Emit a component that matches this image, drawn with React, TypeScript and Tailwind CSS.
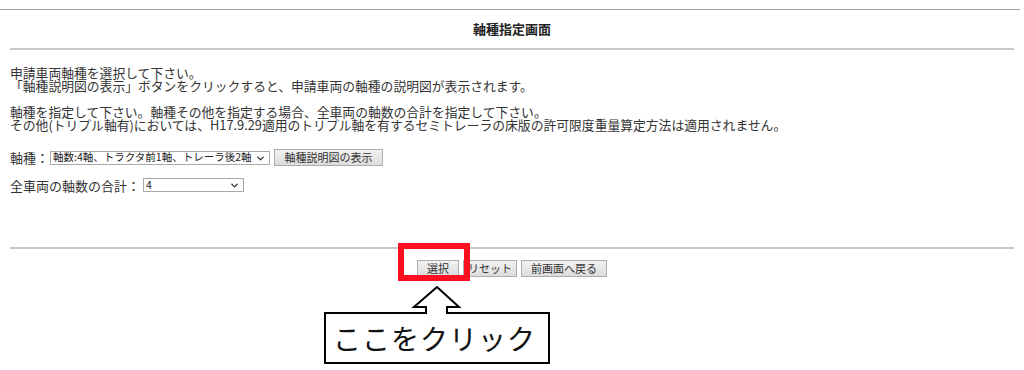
import { ChevronDown } from 'lucide-react';

const jp = { fontFamily: '"Noto Sans CJK JP", "Noto Sans", sans-serif' };

function FakeSelect({ value, width }: { value: string; width: string }) {
  return (
    <div className={`relative inline-flex h-[14px] items-center border border-[#a9a9a9] bg-white ${width}`}>
      <span className="pl-[2px] text-[10.5px] leading-none text-[#222] whitespace-nowrap">{value}</span>
      <ChevronDown className="absolute right-[3px] top-[1px] h-[11px] w-[11px] text-[#333]" strokeWidth={3} />
    </div>
  );
}

function Btn({ children, className = '' }: { children: React.ReactNode; className?: string }) {
  return (
    <button
      className={`h-[17px] whitespace-nowrap border border-[#adadad] bg-gradient-to-b from-[#f2f2f2] to-[#dcdcdc] px-[3px] text-[11px] leading-none text-[#333] ${className}`}
    >
      {children}
    </button>
  );
}

export default function App() {
  return (
    <div className="relative h-[370px] w-[1024px] overflow-hidden bg-white text-[#333]" style={jp}>
      <div className="pt-[9px]">
        <div className="mr-[4px] border-t border-[#a0a0a0]" />
        <div className="flex h-[38px] items-center justify-center text-[13px] font-bold text-[#222]">軸種指定画面</div>
        <div className="mx-[10px] h-[2px] bg-[#c8c8c8]" />
      </div>

      <div className="px-[10px] pt-[16px] text-[12.8px] leading-[13px]">
        <p>申請車両軸種を選択して下さい。</p>
        <p>「軸種説明図の表示」ボタンをクリックすると、申請車両の軸種の説明図が表示されます。</p>
        <p className="mt-[13px]">軸種を指定して下さい。軸種その他を指定する場合、全車両の軸数の合計を指定して下さい。</p>
        <p>その他(トリプル軸有)においては、H17.9.29適用のトリプル軸を有するセミトレーラの床版の許可限度重量算定方法は適用されません。</p>

        <div className="mt-[18px] flex items-center gap-[1px]">
          <span className="text-[13px]">軸種：</span>
          <FakeSelect value="軸数:4軸、トラクタ前1軸、トレーラ後2軸" width="w-[220px]" />
          <Btn className="ml-[3px] w-[109px]">軸種説明図の表示</Btn>
        </div>

        <div className="mt-[12px] flex items-center gap-[3px]">
          <span className="text-[13px]">全車両の軸数の合計：</span>
          <FakeSelect value="4" width="w-[101px]" />
        </div>
      </div>

      <div className="mx-[10px] mt-[55px] h-[2px] bg-[#c8c8c8]" />

      <div className="mt-[11px] flex justify-center gap-[4px]">
        <Btn className="w-[42px]">選択</Btn>
        <Btn className="w-[54px]">リセット</Btn>
        <Btn className="w-[86px]">前画面へ戻る</Btn>
      </div>

      {/* annotation overlay */}
      <div className="absolute left-[398px] top-[243px] h-[38px] w-[72px] border-[6px] border-[#fa1020]" />
      <svg className="absolute left-[324px] top-[286px]" width="227" height="79" viewBox="0 0 227 79">
        <path
          d="M102 27 L1 27 L1 77 L225 77 L225 27 L123 27 L123 21 L135 21 L113 1 L90 21 L102 21 Z"
          fill="white"
          stroke="black"
          strokeWidth="2"
          strokeLinejoin="miter"
        />
      </svg>
      <div className="absolute left-[333px] top-[318px] text-[28px] leading-[40px] tracking-[1px] text-[#111]">ここをクリック</div>
    </div>
  );
}
